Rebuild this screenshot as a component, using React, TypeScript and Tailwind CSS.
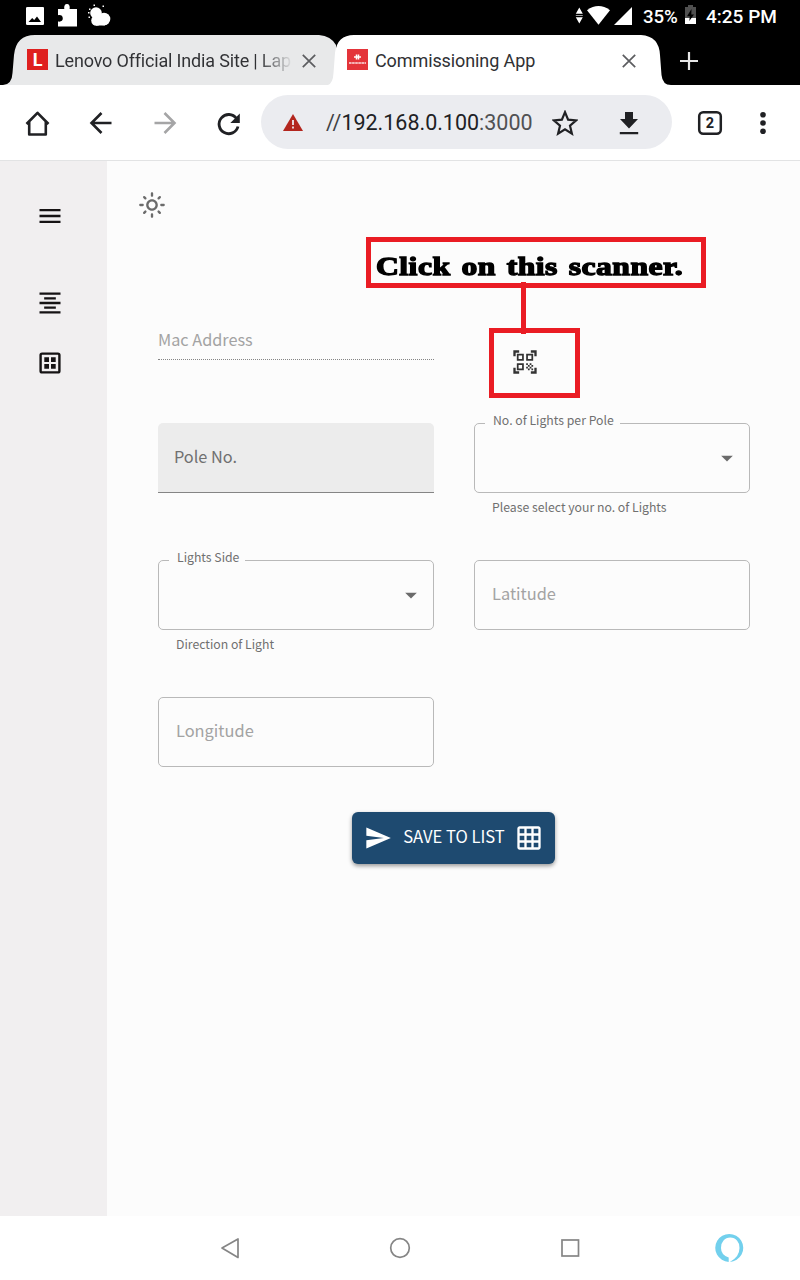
import React from 'react';
import { MdMenu, MdOutlineLightMode, MdQrCodeScanner, MdSend, MdGridOn, MdFormatAlignCenter, MdArrowDropDown } from 'react-icons/md';

function StatusBar() {
  return (
    <div className="flex h-[34px] shrink-0 items-center bg-black text-white">
      <svg className="ml-[25px] h-[34px] w-[90px] shrink-0" viewBox="25 0 90 34" fill="#fff">
        <path fillRule="evenodd" d="M27.500 7h15.500q1 0 1 1v16q0 1-1 1h-15.500q-1.500 0-1.500-1V8q0-1 1.500-1zM28.500 22h12.500l-4-5.500-2.800 3.600-2-2.200z" />
        <path d="M58 9h6.300c-.5-3 .5-5 2.700-5s3.200 2 2.600 5H77v17.500H58v-5c3 .6 4.800-.8 4.800-3.200S61 14.600 58 15.200z" />
        <circle cx="96" cy="13" r="5.800" />
        <circle cx="96.500" cy="20.500" r="5.300" />
        <circle cx="104" cy="19" r="6.300" />
        <path d="M96 16h9v9.500h-9z" />
        <path d="M93.500 4.500h1.500V6h-1.500zM102.500 5.500h1.500V7h-1.500zM89 8.500h1.500V10H89zM88 12h1.500v1.500H88zM88.500 16.500H90V18h-1.500z" />
      </svg>
      <div className="grow" />
      <svg className="h-[34px] w-[60px] shrink-0" viewBox="575 0 60 34" fill="#fff">
        <path d="M579.300 7.500l3.500 6.300h-7zM579.300 23.500l3.500-6.300h-7z" />
        <path d="M575.800 15h7v1h-7z" fill="#999" />
        <path d="M598.500 24.800L587 10.200Q598.500 1.800 610 10.200z" />
        <path d="M614 25L632 7v18z" />
      </svg>
      <span className="ml-[8px] w-[42px] whitespace-nowrap pb-[1px] text-[18.700px] font-medium leading-[32px] tracking-[-0.100px]">35%</span>
      <svg className="h-[34px] w-[11px] shrink-0" viewBox="0 0 11 34">
        <path d="M0 7h3V5h5v2h3v11H0z" fill="#505050" />
        <path d="M0 18h11v6H0z" fill="#fff" />
        <path d="M6.500 9L2 16.300h2.800L4.300 21 9 14.500H6.300z" fill="#000" />
      </svg>
      <span className="ml-[10px] mr-[22px] w-[72px] whitespace-nowrap pb-[1px] text-[19px] font-medium leading-[33px]">4:25 PM</span>
    </div>
  );
}

function CloseIcon({ className }: { className: string }) {
  return (
    <svg className={className} viewBox="0 0 14 14" fill="none" stroke="#5c5d60" strokeWidth="1.700">
      <path d="M.8.800l12.400 12.400M13.200.800L.8 13.200" />
    </svg>
  );
}

function TabStrip() {
  return (
    <div className="relative flex h-[51px] shrink-0 items-center bg-black text-[18px] text-[#303134]">
      <svg className="absolute left-0 top-0" width="800" height="51" viewBox="0 34 800 51">
        <path d="M3 85q9-.5 9.500-12L14 55Q16 35 35 35H319q12 1 17 10V85z" fill="#e8e9ea" />
        <path d="M328 85q5-2 5.500-12L335 53Q337 35 354 35H641Q659 36 660 55l1.500 20q1 10 9.500 10z" fill="#fff" />
      </svg>
      <div className="relative ml-[27px] flex size-[21px] items-center justify-center bg-[#df201f] text-[18px] font-bold text-white">L</div>
      <div className="relative ml-[7px] w-[238px] overflow-hidden whitespace-nowrap bg-gradient-to-r from-[#303134] from-85% to-[#e8e9ea] to-100% bg-clip-text pt-[2px] tracking-[-0.170px] text-transparent">Lenovo Official India Site | Lap</div>
      <CloseIcon className="relative ml-[9px] mt-[2px] size-[14px]" />
      <svg className="relative ml-[31px] size-[21px]" viewBox="0 0 21 21">
        <path d="M0 0h21v21H0z" fill="#e4343a" />
        <path d="M9.500 5.500v5M11.500 5.500v5M7 8h7" stroke="#fff" strokeWidth="1.500" fill="none" />
        <path d="M2 14h17" stroke="#fff" strokeOpacity=".85" strokeWidth="1.600" strokeDasharray="2.600 .5" />
      </svg>
      <div className="relative ml-[7px] w-[247px] whitespace-nowrap pt-[2px] tracking-[-0.100px]">Commissioning App</div>
      <CloseIcon className="relative mt-[2px] size-[14px]" />
      <svg className="relative ml-[44px] mt-[3px] size-[18px]" viewBox="0 0 18 18" stroke="#e6e6e6" strokeWidth="2.200">
        <path d="M0 9h18M9 0v18" />
      </svg>
    </div>
  );
}

function Toolbar() {
  return (
    <div className="flex h-[76px] shrink-0 items-center border-b border-[#e2e3e4] bg-white text-[#202124]">
      <svg className="h-[75px] w-[261px] shrink-0" viewBox="0 85 261 75" fill="none" stroke="#202124" strokeWidth="2.600">
        <path d="M26.500 124L37.500 112.800l11 11.200M29.200 122v12.500h16.600V122" strokeLinejoin="round" />
        <path d="M111.500 123H92M101.500 113l-10 10 10 10" />
        <path d="M154.500 123H174M164.500 113l10 10-10 10" stroke="#a5a5a6" />
        <path d="M236.500 118.500A9.600 9.600 0 1 0 238 126.500" strokeWidth="2.800" />
        <path d="M239.800 113.500v9.500h-9.500z" fill="#202124" stroke="none" />
      </svg>
      <div className="mb-[1px] flex h-[54px] w-[411px] shrink-0 items-center rounded-full bg-[#ebecf0]">
        <svg className="ml-[22px] h-[17px] w-[20px]" viewBox="0 0 20 17">
          <path d="M10 0l10 17H0z" fill="#b3261e" />
          <path d="M10 6v5M10 12.500v2" stroke="#ebecf0" strokeWidth="1.800" />
        </svg>
        <span className="ml-[23px] w-[207px] whitespace-nowrap pt-[1px] text-[21.500px] leading-[53px] tracking-[-0.010px]"><span className="text-[#404144]">//</span>192.168.0.100<span className="text-[#505154]">:3000</span></span>
        <svg className="ml-[19px] mt-[1px] h-[26px] w-[26px]" viewBox="0 0 26 26" fill="none" stroke="#202124" strokeWidth="2.200">
          <path d="M13 2.200l3.100 7.500 8.100.7-6.200 5.300 1.900 7.900-6.900-4.200-6.900 4.200L8 15.700l-6.200-5.300 8.100-.7z" />
        </svg>
        <svg className="ml-[41px] mt-[2px] h-[24px] w-[20px]" viewBox="0 0 20 24" fill="#202124">
          <path d="M6 1h8v7h5l-9 9.500L1 8h5zM.8 21h18.400v2.300H.8z" />
        </svg>
      </div>
      <svg className="ml-[25px] size-[26px]" viewBox="0 0 26 26">
        <rect x="2.200" y="2.200" width="21.600" height="21.600" rx="4" fill="none" stroke="#202124" strokeWidth="2.500" />
        <text x="13" y="18.200" textAnchor="middle" fontSize="14.500" fontWeight="700" fill="#202124">2</text>
      </svg>
      <svg className="ml-[36px] h-[24px] w-[8px]" viewBox="0 0 8 24" fill="#202124">
        <circle cx="4" cy="3.800" r="2.800" /><circle cx="4" cy="12" r="2.800" /><circle cx="4" cy="20.200" r="2.800" />
      </svg>
    </div>
  );
}

function Sidebar() {
  return (
    <aside className="flex w-[107px] shrink-0 flex-col bg-[#f1eff0] pl-[36px] pt-[41px] text-[#161314]">
      <MdMenu className="size-[28px]" />
      <MdFormatAlignCenter className="mt-[59px] size-[28px]" />
      <svg className="mt-[32px] size-[28px]" viewBox="0 0 28 28">
        <rect x="4.600" y="4.600" width="18.800" height="18.800" rx="1.500" fill="none" stroke="currentColor" strokeWidth="2.400" />
        <path d="M8.300 8.300h4.700V13H8.300zM15 8.300h4.700V13H15zM8.300 15H13v4.700H8.300zM15 15h4.700v4.700H15z" fill="currentColor" />
      </svg>
    </aside>
  );
}

function SelectField({ label, help }: { label: string; help: string }) {
  return (
    <div className="h-[137px]">
      <div className="relative flex h-[70px] items-center justify-end rounded-[5px] border border-[#b9b9b9] pr-[8px]">
        <span className="absolute left-[10px] top-[-14px] whitespace-nowrap bg-[#fcfcfc] pl-[8px] pr-[6px] text-[12.250px] leading-[20px] text-[#707070]">{label}</span>
        <MdArrowDropDown className="size-[28px] text-[#6b6b6b]" />
      </div>
      <p className="ml-[18px] mt-[4px] whitespace-nowrap text-[12.250px] leading-[20px] text-[#707070]">{help}</p>
    </div>
  );
}

function OutlinedField({ label }: { label: string }) {
  return (
    <div className="h-[137px]">
      <div className="flex h-[70px] items-center rounded-[5px] border border-[#b9b9b9] pb-[3px] pl-[17px] text-[16.400px] text-[#a3a3a3]">{label}</div>
    </div>
  );
}

function Callout() {
  return (
    <div className="pointer-events-none absolute left-[259px] top-[76px] h-[161px] w-[340px]">
      <div className="flex h-[51px] w-[340px] items-center border-[5px] border-[#ea1c24] pl-[5px] pt-[8px]">
        <span className="origin-left scale-x-[1.240] whitespace-nowrap font-['Liberation_Serif',serif] text-[25.500px] font-bold leading-[30px] text-black [-webkit-text-stroke:1.300px_#000] [letter-spacing:0.400px] [word-spacing:2px]">Click on this scanner.</span>
      </div>
      <div className="absolute left-[155px] top-[45px] h-[52px] w-[5px] bg-[#ea1c24]" />
      <div className="absolute left-[123px] top-[91px] h-[70px] w-[91px] border-[5px] border-[#ea1c24]" />
    </div>
  );
}

function Commissioning() {
  return (
    <main className="relative grow bg-[#fcfcfc] font-['Noto_Sans_CJK_SC',sans-serif]">
      <div className="flex h-[161px] pl-[31px] pt-[30px]">
        <MdOutlineLightMode className="size-[28px] text-[#6b6b6b]" />
      </div>
      <div className="ml-[51px] grid w-[592px] grid-cols-2 gap-x-[40px]">
        <div className="h-[101px]">
          <div className="flex h-[38px] items-center border-b border-dotted border-[#858585] pb-[2px] text-[16.250px] text-[#a3a3a3]">Mac Address</div>
        </div>
        <div className="h-[101px] pl-[36.500px] pt-[26px]">
          <MdQrCodeScanner className="size-[28px] text-[#333]" />
        </div>
        <div className="h-[137px]">
          <div className="flex h-[70px] items-center rounded-t-[5px] border-b border-[#858585] bg-[#ececec] pb-[3px] pl-[16px] text-[16.300px] text-[#707070]">Pole No.</div>
        </div>
        <SelectField label="No. of Lights per Pole" help="Please select your no. of Lights" />
        <SelectField label="Lights Side" help="Direction of Light" />
        <OutlinedField label="Latitude" />
        <div className="-mt-px pt-px">
          <OutlinedField label="Longitude" />
        </div>
      </div>
      <button className="ml-[245px] mt-[-22px] flex h-[52px] w-[203px] items-center rounded-[6px] bg-[#1e4a70] pl-[12px] text-[16.600px] text-white shadow-[0_2px_4px_rgba(0,0,0,0.4)]">
        <MdSend className="size-[28px]" />
        <span className="ml-[11px] w-[102px] whitespace-nowrap pb-[3px]">SAVE TO LIST</span>
        <MdGridOn className="ml-[10px] size-[28px]" />
      </button>
      <Callout />
    </main>
  );
}

function NavigationBar() {
  return (
    <nav className="h-[64px] shrink-0 bg-white">
      <svg width="800" height="64" viewBox="0 1216 800 64" fill="none" stroke="#858585" strokeWidth="1.700">
        <path d="M238 1239v18.500l-16-9.500z" strokeLinejoin="round" />
        <circle cx="400" cy="1248" r="9.300" />
        <rect x="562" y="1240" width="16.500" height="16" />
        <path d="M728.700 1261.900A14 14 0 1 1 729.800 1261.900Q739.500 1257 739.500 1248A9.300 9.500 0 1 0 721 1248Q721 1255 728.700 1257.500z" fill="#72d0ed" stroke="none" />
      </svg>
    </nav>
  );
}

export default function App() {
  return (
    <div className="flex h-[1280px] w-[800px] flex-col overflow-hidden bg-white font-['Roboto',sans-serif]">
      <StatusBar />
      <TabStrip />
      <Toolbar />
      <div className="flex grow">
        <Sidebar />
        <Commissioning />
      </div>
      <NavigationBar />
    </div>
  );
}
